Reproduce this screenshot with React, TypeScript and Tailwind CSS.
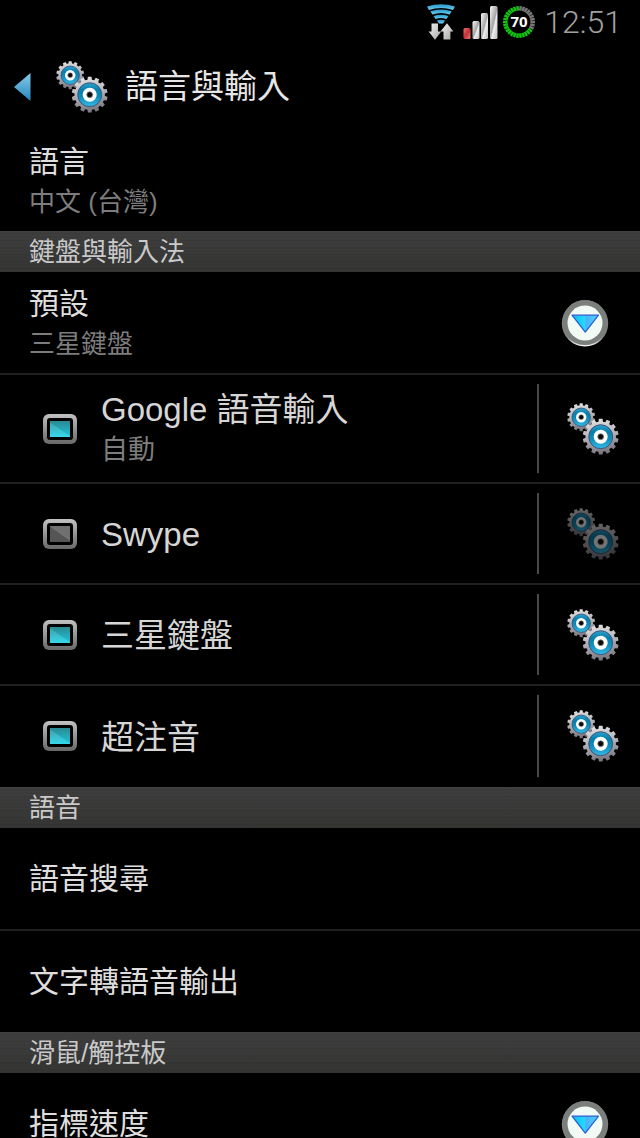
import { useId, useState, type ReactNode } from "react";

function gearPath(cx: number, cy: number, outer: number, inner: number, teeth: number): string {
  const step = (Math.PI * 2) / teeth;
  const points: string[] = [];
  for (let i = 0; i < teeth; i++) {
    const a = i * step - Math.PI / 2;
    const corners: [number, number][] = [
      [inner, a - step * 0.33],
      [outer, a - step * 0.23],
      [outer, a + step * 0.23],
      [inner, a + step * 0.33],
    ];
    for (const [r, t] of corners) {
      points.push(`${(cx + r * Math.cos(t)).toFixed(2)} ${(cy + r * Math.sin(t)).toFixed(2)}`);
    }
  }
  return `M${points.join("L")}Z`;
}

function GearsIcon() {
  const id = useId();
  const metal = `${id}-metal`;
  const blue = `${id}-blue`;
  return (
    <svg viewBox="0 0 52 52" className="size-[52px] shrink-0" aria-hidden="true">
      <defs>
        <linearGradient id={metal} x1="0" y1="0" x2="0.2" y2="1">
          <stop offset="0" stopColor="#e8e8e8" />
          <stop offset="0.5" stopColor="#b8b7bc" />
          <stop offset="1" stopColor="#7c7982" />
        </linearGradient>
        <linearGradient id={blue} x1="0" y1="0" x2="0" y2="1">
          <stop offset="0" stopColor="#2ba3cc" />
          <stop offset="0.3" stopColor="#087fac" />
          <stop offset="0.6" stopColor="#0f8dbb" />
          <stop offset="1" stopColor="#35bbe4" />
        </linearGradient>
      </defs>
      <path d={gearPath(14.2, 14.2, 14, 11.9, 14)} fill={`url(#${metal})`} />
      <circle cx="14.200" cy="14.200" r="9.200" fill={`url(#${blue})`} stroke="#3c4a72" strokeWidth="0.8" />
      <circle cx="14.200" cy="14.200" r="5.200" fill="#fff" />
      <circle cx="14.200" cy="14.200" r="2.400" fill="#0a0a0a" stroke="#777" strokeWidth="0.6" />
      <path d={gearPath(33.7, 33.7, 18, 15.2, 14)} fill={`url(#${metal})`} />
      <circle cx="33.700" cy="33.700" r="12" fill={`url(#${blue})`} stroke="#3c4a72" strokeWidth="0.9" />
      <circle cx="33.700" cy="33.700" r="7" fill="#fff" />
      <circle cx="33.700" cy="33.700" r="2.900" fill="#0a0a0a" stroke="#777" strokeWidth="0.8" />
    </svg>
  );
}

function WifiIcon() {
  return (
    <svg viewBox="0 0 28 37" className="h-[37px] w-7" aria-hidden="true">
      <defs>
        <linearGradient id="wifi-blue" x1="0" y1="0" x2="0" y2="1">
          <stop offset="0" stopColor="#2795c8" />
          <stop offset="1" stopColor="#6fd0f5" />
        </linearGradient>
        <linearGradient id="arrow-grey" x1="0" y1="0" x2="1" y2="1">
          <stop offset="0" stopColor="#f5f5f5" />
          <stop offset="1" stopColor="#a5a5a5" />
        </linearGradient>
      </defs>
      <g fill="url(#wifi-blue)">
        <path d="M0 2.600Q14-2 28 2.600L26 6Q14 2 2 6Z" />
        <path d="M3.300 7.300Q14 3.600 24.700 7.300L22.600 10.500Q14 7.500 5.400 10.500Z" />
        <path d="M6.500 12Q14 9.400 21.500 12L19.400 15Q14 13.200 8.600 15Z" />
        <path d="M9.800 16.500Q14 15 18.200 16.500L16 19.500H12Z" />
      </g>
      <g fill="url(#arrow-grey)">
        <path d="M4.500 19.500h6.500v8h3.200L8 35.800 1.600 27.500h2.900Z" />
        <path d="M16.500 35.500v-8h-3L20 19.200l6.400 8.300h-3v8Z" />
      </g>
    </svg>
  );
}

function SignalIcon() {
  return (
    <svg viewBox="0 0 35 33" className="h-[33px] w-[35px]" aria-hidden="true">
      <defs>
        <linearGradient id="bar-grey" x1="0" y1="0" x2="1" y2="1">
          <stop offset="0" stopColor="#fafafa" />
          <stop offset="0.5" stopColor="#a5a5a5" />
          <stop offset="0.6" stopColor="#eee" />
          <stop offset="1" stopColor="#bbb" />
        </linearGradient>
        <linearGradient id="bar-red" x1="0" y1="0" x2="1" y2="1">
          <stop offset="0" stopColor="#f07070" />
          <stop offset="0.5" stopColor="#c62f35" />
          <stop offset="1" stopColor="#e58080" />
        </linearGradient>
      </defs>
      <rect x="0.500" y="22" width="7" height="11" rx="1.500" fill="url(#bar-red)" />
      <rect x="9.500" y="15" width="7" height="18" rx="1.500" fill="url(#bar-grey)" />
      <rect x="18" y="7" width="7" height="26" rx="1.500" fill="url(#bar-grey)" />
      <rect x="27" y="0" width="7.500" height="33" rx="1.500" fill="url(#bar-grey)" />
    </svg>
  );
}

function BatteryIcon({ level }: { level: number }) {
  const ticks = 30;
  return (
    <svg viewBox="0 0 34 34" className="size-[34px]" role="img" aria-label={`${level}%`}>
      {Array.from({ length: ticks }, (_, i) => (
        <rect
          key={i}
          x="15.800"
          y="1"
          width="2.500"
          height="4.600"
          fill={i / ticks < 1 - level / 100 ? "#777" : "#10c410"}
          transform={`rotate(${(i + 0.5) * (360 / ticks)} 17 17)`}
        />
      ))}
      <text x="17" y="22" textAnchor="middle" fill="#fff" className="font-['Open_Sans',sans-serif] text-[15px] font-bold">
        {level}
      </text>
    </svg>
  );
}

function DropDownButton({ label }: { label: string }) {
  return (
    <button type="button" aria-label={label} className="mr-[31px] shrink-0">
      <svg viewBox="0 0 48 48" className="size-12" aria-hidden="true">
        <defs>
          <linearGradient id="ring" x1="0" y1="0" x2="0" y2="1">
            <stop offset="0" stopColor="#777b78" />
            <stop offset="0.8" stopColor="#858885" />
            <stop offset="1" stopColor="#fff" />
          </linearGradient>
          <linearGradient id="tri" x1="0" y1="0" x2="1" y2="0">
            <stop offset="0" stopColor="#12b4f0" />
            <stop offset="0.48" stopColor="#22dcff" />
            <stop offset="0.52" stopColor="#4db0fa" />
            <stop offset="1" stopColor="#49d6ff" />
          </linearGradient>
        </defs>
        <circle cx="24" cy="24.300" r="23.200" fill="url(#ring)" />
        <circle cx="24" cy="23.600" r="20" fill="none" stroke="#7b7f7c" strokeWidth="5" />
        <circle cx="24" cy="24" r="17.500" fill="#f2faf6" />
        <path d="M11 16.200H37.500L24.300 33.200Z" fill="url(#tri)" stroke="#2d5bd0" strokeWidth="1.200" strokeLinejoin="round" />
      </svg>
    </button>
  );
}

function SectionHeader({ children }: { children: ReactNode }) {
  return (
    <h2 className="flex h-[41px] items-center bg-[repeating-linear-gradient(180deg,rgba(255,255,255,0.02)_0px,rgba(0,0,0,0.04)_3px,rgba(255,255,255,0.01)_4px,rgba(0,0,0,0.02)_7px),linear-gradient(180deg,#3d3d3d,#333332)] px-[29px] text-[26px] leading-[42px] text-[#c9c9c9]">
      {children}
    </h2>
  );
}

function Row({ title, detail, action, last = false }: { title: string; detail?: string; action?: ReactNode; last?: boolean }) {
  return (
    <li
      className={`flex items-center justify-between pl-[29px] ${last ? "min-h-[101px]" : "min-h-[103px] border-b-2 border-[#202020]"}`}
    >
      <a href="#" className="flex-1">
        <div className="text-[30px] leading-[42px] text-[#dedede]">{title}</div>
        {detail && <div className="text-[26px] leading-[38px] text-[#7d7d7d]">{detail}</div>}
      </a>
      {action}
    </li>
  );
}

interface InputMethod {
  name: string;
  detail?: string;
  enabled: boolean;
}

function InputMethodRow({ method, last }: { method: InputMethod; last: boolean }) {
  const [enabled, setEnabled] = useState(method.enabled);
  return (
    <li
      className={`flex items-stretch ${method.detail ? "min-h-[109px]" : "min-h-[101px]"} ${last ? "pb-px" : "border-b-2 border-[#202020]"}`}
    >
      <label className="flex flex-1 items-center gap-6 pl-[43px]">
        <span className="flex h-[30px] w-[34px] shrink-0 rounded-md bg-linear-to-b from-[#c2c2c2] to-[#686868] p-1">
          <input
            type="checkbox"
            checked={enabled}
            onChange={(e) => setEnabled(e.target.checked)}
            className="h-full w-full appearance-none rounded-[3px] border-[3px] border-black bg-[linear-gradient(35deg,#555_50%,#707070_52%)] bg-origin-content checked:bg-[linear-gradient(215deg,rgba(0,0,0,0.06)_50%,rgba(255,255,255,0.1)_52%),linear-gradient(180deg,#2d929b,#1fd3ea)]"
          />
        </span>
        <span>
          <span className={`block text-[33px] text-[#d6d6d6] ${method.detail ? "leading-[42px]" : "leading-[44px] pt-[3px]"}`}>
            {method.name}
          </span>
          {method.detail && <span className="block text-[27px] leading-[38px] text-[#7d7d7d]">{method.detail}</span>}
        </span>
      </label>
      <button
        type="button"
        disabled={!enabled}
        aria-label={`${method.name} 設定`}
        className="my-[9px] flex w-[103px] items-center border-l-2 border-[#484848] pl-7"
      >
        <span className={enabled ? "" : "opacity-45"}>
          <GearsIcon />
        </span>
      </button>
    </li>
  );
}

const methods: InputMethod[] = [
  { name: "Google 語音輸入", detail: "自動", enabled: true },
  { name: "Swype", enabled: false },
  { name: "三星鍵盤", enabled: true },
  { name: "超注音", enabled: true },
];

export default function App() {
  return (
    <div className="flex h-screen flex-col bg-black font-['Liberation_Sans','Noto_Sans_CJK_TC',sans-serif] text-[#dedede]">
      <div className="flex h-11 shrink-0 items-center justify-end gap-2 pr-[18px]">
        <WifiIcon />
        <div className="flex items-center gap-1">
          <SignalIcon />
          <BatteryIcon level={70} />
        </div>
        <time className="font-['Roboto',sans-serif] text-[32px] leading-10 font-light text-[#a0a0a0]">12:51</time>
      </div>
      <header className="flex h-[86px] shrink-0 items-center pl-[14px]">
        <a href="#" aria-label="返回" className="mr-[25px]">
          <svg viewBox="0 0 17 28" className="h-7 w-[17px]" aria-hidden="true">
            <defs>
              <linearGradient id="back" x1="0" y1="0" x2="0" y2="1">
                <stop offset="0" stopColor="#86cdea" />
                <stop offset="1" stopColor="#2385bd" />
              </linearGradient>
            </defs>
            <path d="M0 14L16.500 0V28Z" fill="url(#back)" />
          </svg>
        </a>
        <GearsIcon />
        <h1 className="ml-[17px] text-[33px] leading-[44px] text-[#e6e6e6]">語言與輸入</h1>
      </header>
      <main className="min-h-0 flex-1 overflow-y-auto [scrollbar-width:none]">
        <ul>
          <Row title="語言" detail="中文 (台灣)" last />
        </ul>
        <SectionHeader>鍵盤與輸入法</SectionHeader>
        <ul>
          <Row title="預設" detail="三星鍵盤" action={<DropDownButton label="預設" />} />
          {methods.map((m, i) => (
            <InputMethodRow key={m.name} method={m} last={i === methods.length - 1} />
          ))}
        </ul>
        <SectionHeader>語音</SectionHeader>
        <ul>
          <Row title="語音搜尋" />
          <Row title="文字轉語音輸出" last />
        </ul>
        <SectionHeader>滑鼠/觸控板</SectionHeader>
        <ul>
          <Row title="指標速度" action={<DropDownButton label="指標速度" />} last />
        </ul>
      </main>
    </div>
  );
}
